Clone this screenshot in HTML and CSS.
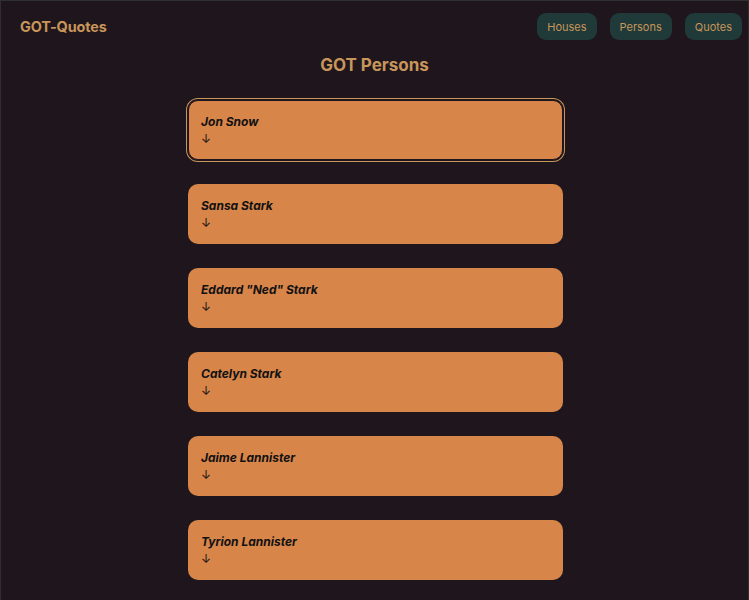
FILE: index.html
```html
<!DOCTYPE html>
<html>
<head>
<meta charset="utf-8">
<link rel="stylesheet" href="styles.css">
</head>
<body>
<div class="frame">
  <header class="topbar">
    <div class="brand">GOT-Quotes</div>
    <nav class="nav">
      <button class="nav-btn">Houses</button>
      <button class="nav-btn">Persons</button>
      <button class="nav-btn">Quotes</button>
    </nav>
  </header>
  <h1 class="page-title">GOT Persons</h1>
  <main class="list">
    <div class="card focused"><div class="name">Jon Snow</div><div class="arrow">↓</div></div>
    <div class="card"><div class="name">Sansa Stark</div><div class="arrow">↓</div></div>
    <div class="card"><div class="name">Eddard "Ned" Stark</div><div class="arrow">↓</div></div>
    <div class="card"><div class="name">Catelyn Stark</div><div class="arrow">↓</div></div>
    <div class="card"><div class="name">Jaime Lannister</div><div class="arrow">↓</div></div>
    <div class="card"><div class="name">Tyrion Lannister</div><div class="arrow">↓</div></div>
  </main>
</div>
</body>
</html>
```
FILE: styles.css
```css
* { box-sizing: border-box; }
html, body { margin: 0; padding: 0; background: #1e161c; height: 100%; overflow: hidden; }
body { font-family: Inter, "Noto Sans", sans-serif; }
.frame {
  min-height: 100vh;
  border: 1px solid #2f2f2f;
  border-bottom: none;
}
.topbar {
  display: flex;
  align-items: center;
  justify-content: space-between;
  padding: 11px 6px 0 19px;
  height: 40px;
}
.brand {
  color: #c8955a;
  font-weight: 700;
  font-size: 14.4px;
  letter-spacing: -0.1px;
}
.nav { display: flex; gap: 13px; }
.nav-btn {
  font-family: Inter, "Noto Sans", sans-serif;
  background: #1f3a39;
  color: #c8955a;
  border: none;
  border-radius: 9px;
  height: 27px;
  padding: 0 10px;
  font-size: 11px;
}
.page-title {
  margin: 13px 0 0;
  text-align: center;
  color: #c8955a;
  font-size: 17px;
  font-weight: 700;
  line-height: 22px;
}
.list {
  display: flex;
  flex-direction: column;
  align-items: center;
  gap: 24px;
  margin-top: 24px;
  padding-left: 2px;
}
.card {
  width: 375px;
  height: 60px;
  background: #d8854a;
  border-radius: 10px;
  padding: 13px 13px 0;
  color: #111;
  font-size: 12px;
  line-height: 17px;
}
.card.focused {
  box-shadow: 0 0 0 1px #1e161c, 0 0 0 2px #c8955a;
  border: 1px solid #1e161c;
  padding: 12px 12px 0;
}
.name { font-weight: 700; font-style: italic; }
.arrow { font-size: 12px; }
```
